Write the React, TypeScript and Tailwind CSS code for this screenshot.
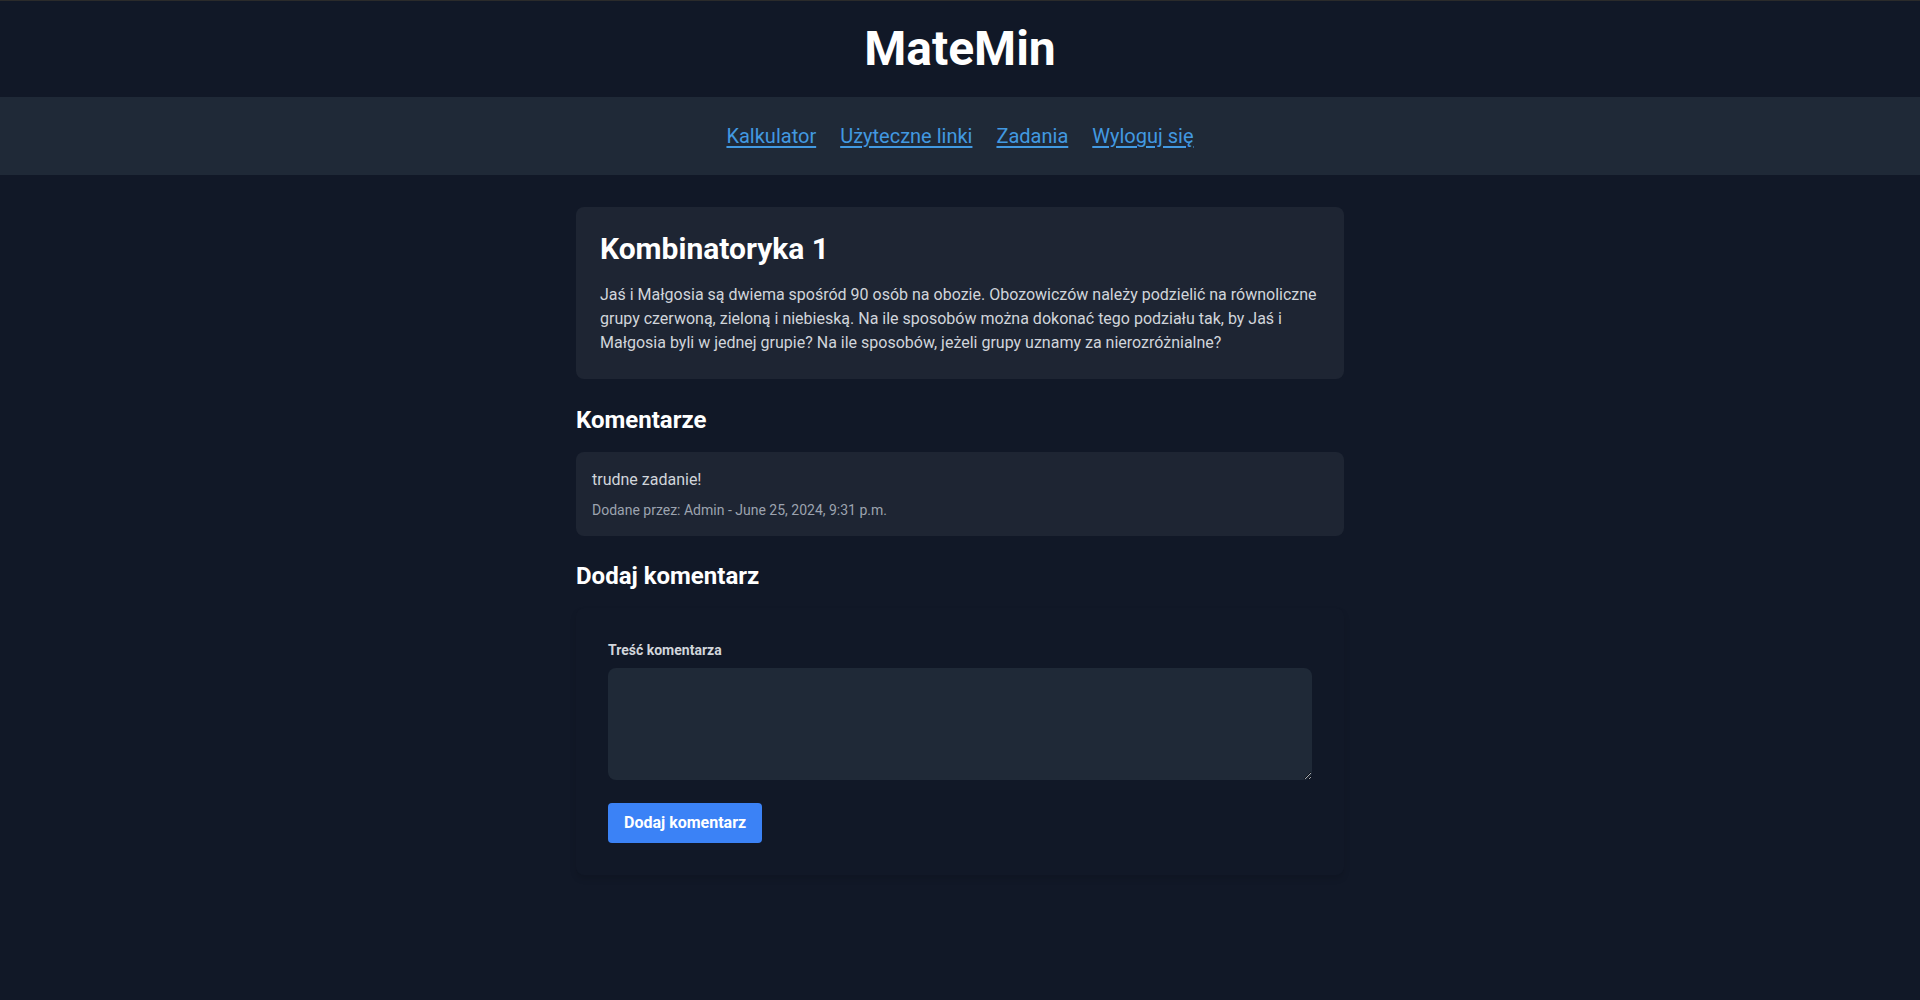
const NAV_LINKS = ["Kalkulator", "Użyteczne linki", "Zadania", "Wyloguj się"];

export default function App() {
  return (
    <div className="min-h-screen border-t border-[#2b2b2b] bg-[#111827] font-['Roboto','Noto_Sans',sans-serif] text-white">
      <header className="bg-[#111827] py-6 text-center">
        <h1 className="text-5xl leading-none font-bold">MateMin</h1>
      </header>

      <nav className="bg-[#1f2937] py-[25px]">
        <ul className="flex justify-center gap-6">
          {NAV_LINKS.map((link) => (
            <li key={link}>
              <a href="#" className="text-xl text-[#4299e1] underline underline-offset-[3px]">
                {link}
              </a>
            </li>
          ))}
        </ul>
      </nav>

      <main className="mx-auto max-w-3xl py-8">
        <section className="mb-[25px] rounded-lg bg-[#1e2533] p-6">
          <h2 className="mb-4 text-3xl font-bold">Kombinatoryka 1</h2>
          <p className="text-base leading-6 text-[#d1d5db]">
            Jaś i Małgosia są dwiema spośród 90 osób na obozie. Obozowiczów należy podzielić na równoliczne
            grupy czerwoną, zieloną i niebieską. Na ile sposobów można dokonać tego podziału tak, by Jaś i
            Małgosia byli w jednej grupie? Na ile sposobów, jeżeli grupy uznamy za nierozróżnialne?
          </p>
        </section>

        <h3 className="mb-4 text-2xl font-bold">Komentarze</h3>
        <div className="mb-6 rounded-lg bg-[#1e2533] p-4">
          <p className="text-base text-[#d1d5db]">trudne zadanie!</p>
          <p className="mt-2 text-sm text-[#9ca3af]">Dodane przez: Admin - June 25, 2024, 9:31 p.m.</p>
        </div>

        <h3 className="mb-4 text-2xl font-bold">Dodaj komentarz</h3>
        <form className="rounded-lg bg-[#111827] p-8 shadow-[0_4px_6px_rgba(0,0,0,0.12)]">
          <label className="mb-2 block text-sm font-bold text-[#d1d5db]">Treść komentarza</label>
          <textarea
            rows={4}
            className="block h-[112px] w-full rounded-lg bg-[#1f2937] px-3 py-2 text-base text-[#d1d5db] outline-none"
          />
          <button
            type="button"
            className="mt-[23px] rounded bg-[#3b82f6] px-4 py-2 text-base font-bold text-white"
          >
            Dodaj komentarz
          </button>
        </form>
      </main>
    </div>
  );
}
